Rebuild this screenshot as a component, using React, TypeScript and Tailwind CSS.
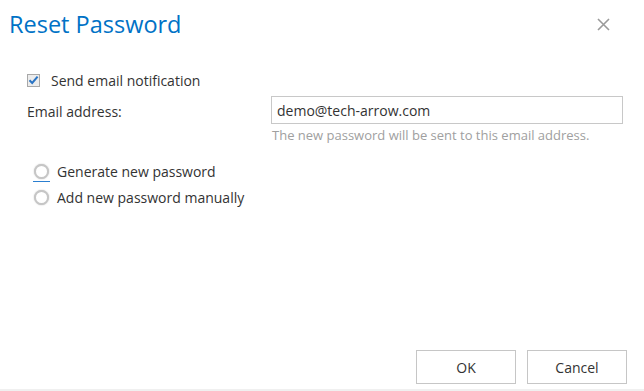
import React, { useState } from 'react';

export default function App() {
  const [notify, setNotify] = useState(true);
  const [email, setEmail] = useState('demo@tech-arrow.com');
  const [mode, setMode] = useState<'generate' | 'manual' | null>(null);

  return (
    <div
      className="w-[644px] h-[391px] bg-white flex flex-col text-[#333] border-b-2 border-[#f0f0f0]"
      style={{ fontFamily: '"Open Sans", "Noto Sans", sans-serif' }}
    >
      {/* Header */}
      <div className="flex items-start justify-between pl-[9px] pr-[34px] pt-[6px]">
        <h1 className="text-[23.5px] leading-[36px] text-[#0072c6]">Reset Password</h1>
        <button className="mt-[12px] text-[#9a9a9a]" aria-label="Close">
          <svg width="13" height="13" viewBox="0 0 13 13" stroke="currentColor" strokeWidth="1.6">
            <path d="M1 1L12 12M12 1L1 12" />
          </svg>
        </button>
      </div>

      {/* Body */}
      <div className="flex flex-col pl-[27px] pr-[21px] pt-[28px]">
        <label className="flex items-center gap-[11px] h-[20px] text-[14px]">
          <span
            onClick={() => setNotify(!notify)}
            className="w-[13px] h-[13px] border border-[#a8a8a8] bg-[#ececec] flex items-center justify-center"
          >
            {notify && (
              <svg width="11" height="10" viewBox="0 0 11 10">
                <path d="M1.5 5.2L4.2 8L9.6 1.6" fill="none" stroke="#2a74c4" strokeWidth="2" />
              </svg>
            )}
          </span>
          Send email notification
        </label>

        <div className="flex mt-[6px]">
          <span className="w-[244px] text-[14px] pt-[5px]">Email address:</span>
          <div className="flex-1 flex flex-col">
            <input
              value={email}
              onChange={(e) => setEmail(e.target.value)}
              className="h-[28px] border border-[#c8c8c8] px-[5px] text-[14px] text-[#333] outline-none"
            />
            <span className="text-[13px] text-[#a0a0a0] mt-[2px] pl-[1px]">
              The new password will be sent to this email address.
            </span>
          </div>
        </div>

        <div className="flex flex-col mt-[13px] pl-[7px]">
          {[
            { key: 'generate' as const, label: 'Generate new password' },
            { key: 'manual' as const, label: 'Add new password manually' },
          ].map((o, i) => (
            <label key={o.key} className="flex items-center gap-[8px] h-[26px] text-[14px]">
              <span className="relative w-[15px] h-[15px]" onClick={() => setMode(o.key)}>
                <span className="absolute inset-0 rounded-full border-2 border-[#c6c6c6] bg-white shadow-[0_0_1.5px_#bbb]" />
                {mode === o.key && <span className="absolute inset-[4px] rounded-full bg-[#0072c6]" />}
                {i === 0 && <span className="absolute left-[-1px] right-[-1px] top-[17px] h-[1px] bg-[#2b7fd0]" />}
              </span>
              {o.label}
            </label>
          ))}
        </div>
      </div>

      <div className="flex-1" />

      {/* Footer */}
      <div className="flex justify-end gap-[11px] pr-[17px] pb-[5px]">
        <button className="w-[100px] h-[34px] border border-[#c6c6c6] bg-white text-[14px] text-[#333]">OK</button>
        <button className="w-[100px] h-[34px] border border-[#c6c6c6] bg-white text-[14px] text-[#333]">Cancel</button>
      </div>
    </div>
  );
}
